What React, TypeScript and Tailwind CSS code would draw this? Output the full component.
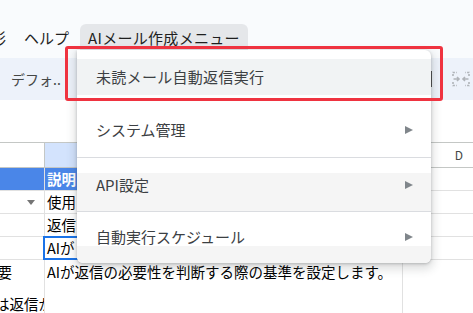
import React from 'react';

type RowProps = {
    a?: React.ReactNode,
    b?: React.ReactNode,
    h: string,
    blue?: boolean,
    active?: boolean
}

const Arrow = () => (
    <svg width="8" height="8" viewBox="0 0 8 8" className="shrink-0">
        <path d="M0 0 L8 4 L0 8 Z" fill="#80868b" />
    </svg>
);

const HideMenusIcon = () => (
    <svg width="18" height="16" viewBox="0 0 18 16" fill="none" stroke="#b0b4b9" strokeWidth="1.6">
        <path d="M1 5V1.5h4M1 11v3.5h4M17 5V1.5h-4M17 11v3.5h-4" strokeDasharray="2 1.4" />
        <path d="M1.5 8h5.5M5 6l2 2-2 2M16.5 8H11M13 6l-2 2 2 2" />
    </svg>
);

const Row = ({a, b, h, blue, active}: RowProps) => (
    <div className={`flex ${h} border-b border-[#e1e1e1]`}>
        <div className={`w-[45px] shrink-0 overflow-hidden border-r border-[#e1e1e1] ${blue ? 'bg-[#4a86e8]' : 'bg-white'}`}>{a}</div>
        <div className={`relative w-[358px] shrink-0 border-r border-[#e1e1e1] pl-[2px] flex items-center ${blue ? 'bg-[#4a86e8] text-white font-bold' : 'bg-white text-black'}`}>
            {b}
            {active && (
                <>
                    <div className="absolute -left-[2px] -top-[1px] -right-[1px] -bottom-[1px] border-2 border-[#1a73e8]" />
                    <div className="absolute -right-[3px] -bottom-[4px] w-[5px] h-[5px] bg-[#1a73e8] border border-white" />
                </>
            )}
        </div>
        <div className="w-[28px] shrink-0 border-r border-[#e1e1e1] bg-white" />
        <div className="w-[56px] shrink-0 bg-white" />
    </div>
);

const App = () => {
    return (
        <div className="relative w-[473px] h-[313px] overflow-hidden bg-[#f9fbfd] font-['Noto_Sans_CJK_JP','Noto_Sans',sans-serif]">
            {/* menu bar */}
            <div className="flex pt-[24px] h-[52px] text-[15px] text-[#1f1f1f]">
                <div className="flex items-center h-[28px]">
                    <span className="-ml-[9px]">形</span>
                    <span className="ml-[18px]">ヘルプ</span>
                    <div className="ml-[11px] h-full flex items-center px-[8px] bg-[#e5e7ea] rounded-t-[6px] tracking-[0.3px]">AIメール作成メニュー</div>
                </div>
            </div>

            {/* toolbar */}
            <div className="mt-[6px] h-[42px] bg-[#edf2fa] flex items-center">
                <span className="ml-[11px] text-[14px] text-[#444746]">デフォ..</span>
                <div className="ml-auto flex items-center mr-[3px]">
                    <div className="w-[2px] h-[16px] bg-[#4a4a4a]" />
                    <div className="ml-[20px]"><HideMenusIcon /></div>
                </div>
            </div>

            {/* formula area */}
            <div className="h-[42px] bg-white" />

            {/* grid */}
            <div className="bg-white text-[14.5px]">
                <div className="flex h-[26px] border-t border-b border-[#c4c7c5]">
                    <div className="w-[45px] shrink-0 border-r border-[#c4c7c5] bg-white" />
                    <div className="w-[358px] shrink-0 border-r border-[#c4c7c5] bg-[#d3e3fd]" />
                    <div className="w-[28px] shrink-0 border-r border-[#c4c7c5] bg-white" />
                    <div className="w-[56px] shrink-0 flex items-center justify-center text-[12px] text-[#444746] bg-white">D</div>
                </div>
                <Row h="h-[23px]" blue b="説明" />
                <Row h="h-[23px]" b="使用" a={
                    <div className="h-full flex items-center justify-end pr-[9px]">
                        <svg width="8" height="5" viewBox="0 0 8 5"><path d="M0 0h8L4 5Z" fill="#757575" /></svg>
                    </div>
                } />
                <Row h="h-[23px]" b="返信" />
                <Row h="h-[23px]" active b="AIが" />
                <div className="flex h-[60px]">
                    <div className="w-[45px] shrink-0 overflow-hidden border-r border-[#e1e1e1] whitespace-nowrap">
                        <div className="-ml-[17px] mt-[2px] leading-[20px]">必要</div>
                        <div className="-ml-[5px] mt-[12px] leading-[20px]">は返信が</div>
                    </div>
                    <div className="w-[358px] shrink-0 border-r border-[#e1e1e1] pl-[2px] pt-[2px] leading-[20px] whitespace-nowrap">AIが返信の必要性を判断する際の基準を設定します。</div>
                    <div className="w-[28px] shrink-0" />
                </div>
            </div>

            {/* dropdown menu */}
            <div className="absolute left-[77px] top-[50px] w-[354px] h-[213px] bg-white rounded-b-[6px] rounded-tr-[6px] shadow-[0_1px_3px_rgba(60,64,67,0.3),0_4px_8px_3px_rgba(60,64,67,0.15)] pt-[9px] flex flex-col text-[15px] text-[#3c4043] overflow-hidden">
                <div className="h-[36px] shrink-0 bg-[#f1f3f4] flex items-center pl-[19px] tracking-[0.3px]">未読メール自動返信実行</div>
                <div className="h-[62px] shrink-0 pt-[8px] flex items-center justify-between pl-[19px] pr-[18px]">
                    <span>システム管理</span>
                    <Arrow />
                </div>
                <div className="shrink-0 border-t border-[#dadce0]" />
                <div className="h-[15px] shrink-0" />
                <div className="h-[38px] shrink-0 bg-[#f5f5f5] pt-[2px] pl-[19px] pr-[18px]">
                    <div className="h-[20px] flex items-center justify-between leading-[20px]">
                        <span>API設定</span>
                        <Arrow />
                    </div>
                </div>
                <div className="shrink-0 border-t border-[#dadce0]" />
                <div className="h-[34px] shrink-0 pt-[15px] pl-[19px] pr-[18px]">
                    <div className="h-[20px] flex items-center justify-between leading-[20px]">
                        <span>自動実行スケジュール</span>
                        <Arrow />
                    </div>
                </div>
                <div className="flex-1 bg-[#f5f5f5]" />
            </div>

            {/* highlight annotation */}
            <div className="absolute left-[65px] top-[46px] w-[378px] h-[55px] border-[3px] border-[#ef3340] rounded-[3px]" />
        </div>
    );
};

export default App;
